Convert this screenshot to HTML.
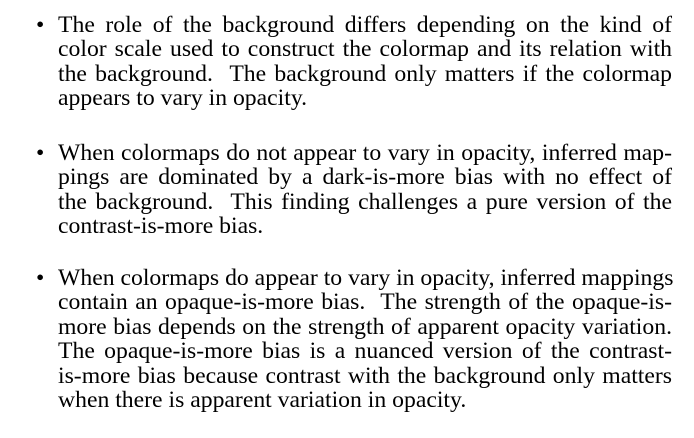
<!DOCTYPE html>
<html><head><meta charset="utf-8"><style>
html,body{margin:0;padding:0;background:#fff;width:694px;height:438px;overflow:hidden}
body{font-family:"Liberation Serif",serif;font-size:23.7px;line-height:24.4px;color:#000}
.p{position:absolute;left:58px;width:614px}
.l{text-align:justify;text-align-last:justify;white-space:nowrap;height:24.4px}
.l.e{text-align-last:left}
.b{position:absolute;left:-22px;top:0}
</style></head><body>
<div class="p" style="top:13px"><span class="b">•</span>
<div class="l">The role of the background differs depending on the kind of</div>
<div class="l">color scale used to construct the colormap and its relation with</div>
<div class="l">the background. &nbsp;The background only matters if the colormap</div>
<div class="l e">appears to vary in opacity.</div></div>
<div class="p" style="top:141px"><span class="b">•</span>
<div class="l">When colormaps do not appear to vary in opacity, inferred map-</div>
<div class="l">pings are dominated by a dark-is-more bias with no effect of</div>
<div class="l">the background. &nbsp;This finding challenges a pure version of the</div>
<div class="l e">contrast-is-more bias.</div></div>
<div class="p" style="top:266px"><span class="b">•</span>
<div class="l">When colormaps do appear to vary in opacity, inferred mappings</div>
<div class="l">contain an opaque-is-more bias. &nbsp;The strength of the opaque-is-</div>
<div class="l">more bias depends on the strength of apparent opacity variation.</div>
<div class="l">The opaque-is-more bias is a nuanced version of the contrast-</div>
<div class="l">is-more bias because contrast with the background only matters</div>
<div class="l e">when there is apparent variation in opacity.</div></div>
</body></html>
